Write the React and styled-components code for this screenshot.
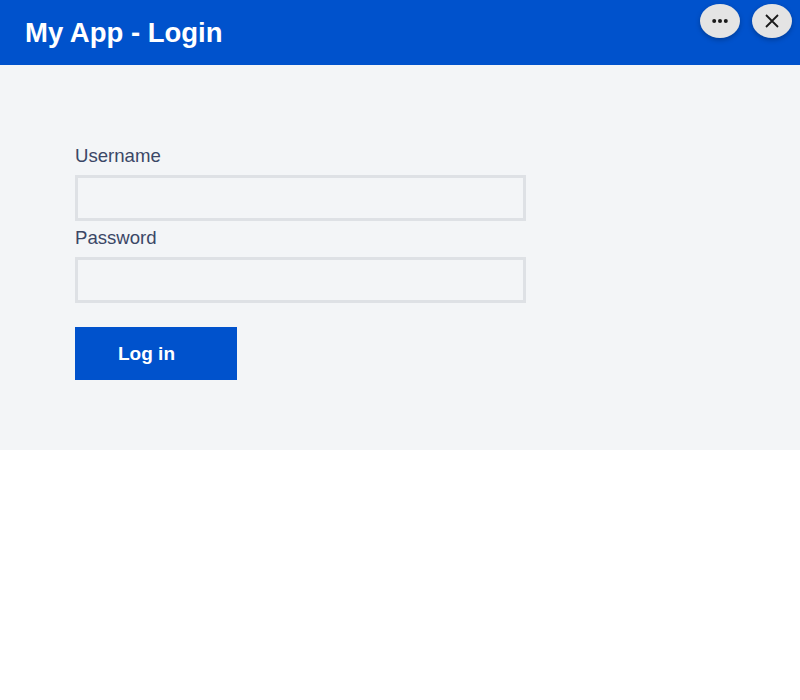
import React from 'react';
import styled, { createGlobalStyle } from 'styled-components';

const GlobalStyle = createGlobalStyle`
  html, body {
    margin: 0;
    padding: 0;
    background: #fff;
    font-family: "Liberation Sans", Arial, sans-serif;
  }
`;

const Page = styled.div`
  width: 800px;
  height: 450px;
  background: #f3f5f7;
  position: relative;
`;

const Header = styled.header`
  height: 65px;
  background: #0052cc;
  display: flex;
  align-items: center;
  padding-left: 25px;
`;

const Title = styled.h1`
  margin: 0;
  font-size: 27.5px;
  font-weight: 700;
  color: #fff;
`;

const WindowActions = styled.div`
  position: absolute;
  top: 4px;
  right: 8px;
  display: flex;
  gap: 12px;
`;

const RoundButton = styled.button`
  width: 40px;
  height: 34px;
  padding: 0;
  border: none;
  border-radius: 50%;
  background: #e4e4e4;
  color: #1a1a1a;
  display: flex;
  align-items: center;
  justify-content: center;
  box-shadow: 0 2px 5px rgba(0, 0, 0, 0.25);
`;

const Form = styled.form`
  width: 452px;
  padding: 81px 0 0 75px;
  display: flex;
  flex-direction: column;
`;

const Label = styled.label`
  font-size: 18.6px;
  line-height: 20px;
  color: #3b4766;
  margin-bottom: 9px;
`;

const Input = styled.input`
  box-sizing: border-box;
  height: 46px;
  width: 451px;
  border: 3px solid #dee1e5;
  background: #f3f5f7;
  margin-bottom: 7px;
`;

const Submit = styled.button`
  width: 162px;
  height: 53px;
  margin-top: 17px;
  padding: 0 19px 0 0;
  border: none;
  background: #0052cc;
  color: #fff;
  font-family: inherit;
  font-size: 19px;
  font-weight: 700;
`;

export default function App() {
  return (
    <>
      <GlobalStyle />
      <Page>
        <Header>
          <Title>My App - Login</Title>
        </Header>
        <WindowActions>
          <RoundButton type="button" aria-label="More">
            <svg width="18" height="6" viewBox="0 0 18 6">
              <circle cx="3.2" cy="3" r="2" fill="currentColor" />
              <circle cx="9" cy="3" r="2" fill="currentColor" />
              <circle cx="14.8" cy="3" r="2" fill="currentColor" />
            </svg>
          </RoundButton>
          <RoundButton type="button" aria-label="Close">
            <svg width="16" height="16" viewBox="0 0 16 16">
              <path d="M2 2 L14 14 M14 2 L2 14" stroke="currentColor" strokeWidth="1.8" fill="none" />
            </svg>
          </RoundButton>
        </WindowActions>
        <Form onSubmit={(e) => e.preventDefault()}>
          <Label htmlFor="username">Username</Label>
          <Input id="username" type="text" />
          <Label htmlFor="password">Password</Label>
          <Input id="password" type="password" />
          <Submit type="submit">Log in</Submit>
        </Form>
      </Page>
    </>
  );
}
